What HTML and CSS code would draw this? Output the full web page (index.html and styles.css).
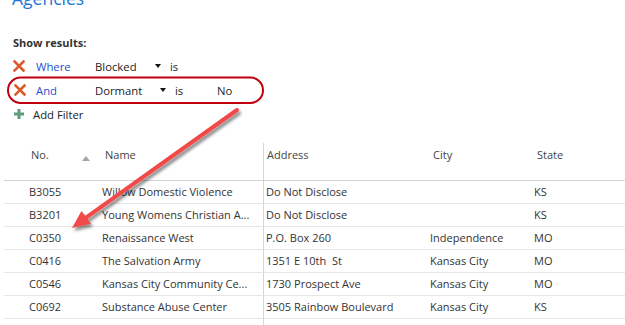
FILE: index.html
```html
<!DOCTYPE html>
<html>
<head>
<meta charset="utf-8">
<link rel="stylesheet" href="styles.css">
</head>
<body>
<div class="page">
  <div class="title">Agencies</div>
  <div class="filters">
    <div class="show">Show results:</div>
    <div class="frow frow-where">
      <span class="xicon"><svg width="12" height="12" viewBox="0 0 12 12"><path d="M1.5 1.5 L10.5 10.5 M10.5 1.5 L1.5 10.5" stroke="#de5a2b" stroke-width="2.6" stroke-linecap="square"/></svg></span>
      <span class="flabel">Where</span>
      <span class="field field-w">Blocked</span>
      <span class="caret"></span>
      <span class="op">is</span>
    </div>
    <div class="frow frow-and">
      <span class="xicon"><svg width="12" height="12" viewBox="0 0 12 12"><path d="M1.5 1.5 L10.5 10.5 M10.5 1.5 L1.5 10.5" stroke="#de5a2b" stroke-width="2.6" stroke-linecap="square"/></svg></span>
      <span class="flabel">And</span>
      <span class="field field-a">Dormant</span>
      <span class="caret"></span>
      <span class="op">is</span>
      <span class="val">No</span>
    </div>
    <div class="frow frow-add">
      <span class="plus"><svg width="10" height="10" viewBox="0 0 10 10"><path d="M5 0 V10 M0 5 H10" stroke="#5f9c7c" stroke-width="3"/></svg></span>
      <span class="addtext">Add Filter</span>
    </div>
  </div>

  <div class="grid">
    <div class="hd c1"><span>No.</span><span class="sort"></span></div>
    <div class="hd c2">Name</div>
    <div class="hd c3">Address</div>
    <div class="hd c4">City</div>
    <div class="hd c5">State</div>

    <div class="cell c1">B3055</div><div class="cell c2">Willow Domestic Violence</div><div class="cell c3">Do Not Disclose</div><div class="cell c4"></div><div class="cell c5">KS</div>
    <div class="cell c1">B3201</div><div class="cell c2">Young Womens Christian A...</div><div class="cell c3">Do Not Disclose</div><div class="cell c4"></div><div class="cell c5">KS</div>
    <div class="cell c1">C0350</div><div class="cell c2">Renaissance West</div><div class="cell c3">P.O. Box 260</div><div class="cell c4">Independence</div><div class="cell c5">MO</div>
    <div class="cell c1">C0416</div><div class="cell c2">The Salvation Army</div><div class="cell c3">1351 E 10th&nbsp; St</div><div class="cell c4">Kansas City</div><div class="cell c5">MO</div>
    <div class="cell c1">C0546</div><div class="cell c2">Kansas City Community Ce...</div><div class="cell c3">1730 Prospect Ave</div><div class="cell c4">Kansas City</div><div class="cell c5">MO</div>
    <div class="cell c1">C0692</div><div class="cell c2">Substance Abuse Center</div><div class="cell c3">3505 Rainbow Boulevard</div><div class="cell c4">Kansas City</div><div class="cell c5">KS</div>
    <div class="cell c1 empty"></div><div class="cell c2 empty"></div><div class="cell c3 empty"></div><div class="cell c4 empty"></div><div class="cell c5 empty"></div>
  </div>
</div>

<svg class="annot" width="625" height="325" viewBox="0 0 625 325">
  <defs>
    <filter id="sh" x="-20%" y="-20%" width="140%" height="140%">
      <feDropShadow dx="2" dy="3" stdDeviation="1.6" flood-color="#000" flood-opacity="0.45"/>
    </filter>
  </defs>
  <rect x="8" y="77.5" width="255" height="25.5" rx="12.75" fill="none" stroke="#c0000c" stroke-width="2"/>
  <g filter="url(#sh)">
    <line x1="237" y1="110" x2="86" y2="217.7" stroke="#f24848" stroke-width="4" stroke-linecap="round"/>
    <polygon points="72,228 91,223.8 81.5,211" fill="#f24848"/>
  </g>
</svg>
</body>
</html>
```

FILE: styles.css
```css
* { box-sizing: border-box; }
html, body { margin: 0; padding: 0; background: #fff; }
body {
  width: 625px;
  height: 325px;
  overflow: hidden;
  position: relative;
  font-family: "Open Sans", "Noto Sans", sans-serif;
  color: #333;
}
.page { display: flex; flex-direction: column; }

.title {
  margin: -13px 0 0 12px;
  height: 21px;
  font-size: 17.5px;
  line-height: 22px;
  color: #2376d4;
}

.filters {
  display: flex;
  flex-direction: column;
  padding-left: 13px;
  margin-top: 25px;
}
.show {
  font-weight: bold;
  font-size: 11px;
  line-height: 20px;
  height: 20px;
  color: #333;
}
.frow {
  display: flex;
  align-items: center;
  height: 24px;
  font-size: 11.3px;
  color: #222;
}
.frow-where { margin-top: 1px; }
.frow-and .xicon { margin-left: 1px; }
.xicon { width: 23px; display: flex; align-items: center; }
.frow-and .xicon { width: 22px; }
.xicon svg { display: block; }
.flabel { width: 59px; color: #1e4fcf; }
.field-w { width: 60px; }
.field-a { width: 65px; }
.caret {
  width: 0; height: 0;
  border-left: 3.5px solid transparent;
  border-right: 3.5px solid transparent;
  border-top: 4px solid #111;
  margin-right: 9px;
}
.op { width: 42px; }
.frow-add { padding-left: 1px; }
.plus { width: 19px; display: flex; align-items: center; }
.plus svg { display: block; }
.addtext { color: #222; }

.grid {
  margin-top: 17px;
  margin-left: 4px;
  display: grid;
  grid-template-columns: 94px 165px 164px 104px 1fr;
  font-size: 11px;
  color: #333;
}
.hd {
  height: 38px;
  padding-top: 3px;
  line-height: 18px;
  border-bottom: 1px solid #d2d2d2;
  color: #444;
}
.hd.c1 { display: flex; justify-content: space-between; padding-left: 27px; padding-right: 8px; }
.sort {
  width: 0; height: 0;
  margin-top: 10px;
  border-left: 4px solid transparent;
  border-right: 4px solid transparent;
  border-bottom: 5px solid #a6a6a6;
}
.hd.c2 { padding-left: 7px; }
.hd.c3 { padding-left: 3px; border-left: 1px solid #d6d6d6; }
.hd.c4 { padding-left: 6px; }
.hd.c5 { padding-left: 6px; }

.cell {
  height: 23px;
  line-height: 22px;
  border-bottom: 1px solid #e6e6e6;
  white-space: nowrap;
  overflow: hidden;
}
.cell.c1 { padding-left: 25px; }
.cell.c2 { padding-left: 4px; }
.cell.c3 { padding-left: 2px; border-left: 1px solid #d6d6d6; }
.cell.c4 { padding-left: 3px; }
.cell.c5 { padding-left: 3px; }
.cell.empty { border-bottom: none; height: 7px; }

.annot {
  position: absolute;
  left: 0;
  top: 0;
  pointer-events: none;
}
```
